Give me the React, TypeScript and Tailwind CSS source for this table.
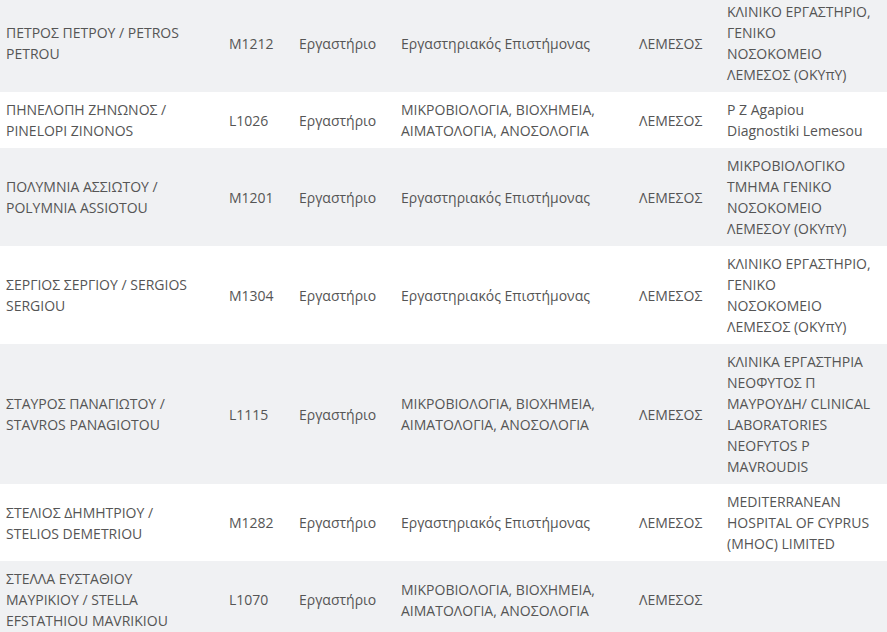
type Row = {
  name: string;
  code: string;
  kind: string;
  specialty: string;
  city: string;
  place: string;
};

const LAB = 'Εργαστήριο';
const SCIENTIST = 'Εργαστηριακός Επιστήμονας';
const MICRO = 'ΜΙΚΡΟΒΙΟΛΟΓΙΑ, ΒΙΟΧΗΜΕΙΑ, ΑΙΜΑΤΟΛΟΓΙΑ, ΑΝΟΣΟΛΟΓΙΑ';

const rows: Row[] = [
  { name: 'ΠΕΤΡΟΣ ΠΕΤΡΟΥ / PETROS PETROU', code: 'M1212', kind: LAB, specialty: SCIENTIST, city: 'ΛΕΜΕΣΟΣ', place: 'ΚΛΙΝΙΚΟ ΕΡΓΑΣΤΗΡΙΟ, ΓΕΝΙΚΟ ΝΟΣΟΚΟΜΕΙΟ ΛΕΜΕΣΟΣ (ΟΚΥπΥ)' },
  { name: 'ΠΗΝΕΛΟΠΗ ΖΗΝΩΝΟΣ / PINELOPI ZINONOS', code: 'L1026', kind: LAB, specialty: MICRO, city: 'ΛΕΜΕΣΟΣ', place: 'P Z Agapiou Diagnostiki Lemesou' },
  { name: 'ΠΟΛΥΜΝΙΑ ΑΣΣΙΩΤΟΥ / POLYMNIA ASSIOTOU', code: 'M1201', kind: LAB, specialty: SCIENTIST, city: 'ΛΕΜΕΣΟΣ', place: 'ΜΙΚΡΟΒΙΟΛΟΓΙΚΟ ΤΜΗΜΑ ΓΕΝΙΚΟ ΝΟΣΟΚΟΜΕΙΟ ΛΕΜΕΣΟΥ (ΟΚΥπΥ)' },
  { name: 'ΣΕΡΓΙΟΣ ΣΕΡΓΙΟΥ / SERGIOS SERGIOU', code: 'M1304', kind: LAB, specialty: SCIENTIST, city: 'ΛΕΜΕΣΟΣ', place: 'ΚΛΙΝΙΚΟ ΕΡΓΑΣΤΗΡΙΟ, ΓΕΝΙΚΟ ΝΟΣΟΚΟΜΕΙΟ ΛΕΜΕΣΟΣ (ΟΚΥπΥ)' },
  { name: 'ΣΤΑΥΡΟΣ ΠΑΝΑΓΙΩΤΟΥ / STAVROS PANAGIOTOU', code: 'L1115', kind: LAB, specialty: MICRO, city: 'ΛΕΜΕΣΟΣ', place: 'ΚΛΙΝΙΚΑ ΕΡΓΑΣΤΗΡΙΑ ΝΕΟΦΥΤΟΣ Π ΜΑΥΡΟΥΔΗ/ CLINICAL LABORATORIES NEOFYTOS P MAVROUDIS' },
  { name: 'ΣΤΕΛΙΟΣ ΔΗΜΗΤΡΙΟΥ / STELIOS DEMETRIOU', code: 'M1282', kind: LAB, specialty: SCIENTIST, city: 'ΛΕΜΕΣΟΣ', place: 'MEDITERRANEAN HOSPITAL OF CYPRUS (MHOC) LIMITED' },
  { name: 'ΣΤΕΛΛΑ ΕΥΣΤΑΘΙΟΥ ΜΑΥΡΙΚΙΟΥ / STELLA EFSTATHIOU MAVRIKIOU', code: 'L1070', kind: LAB, specialty: MICRO, city: 'ΛΕΜΕΣΟΣ', place: '' },
];

export default function App() {
  return (
    <div
      className="w-[887px] h-[632px] overflow-hidden bg-white text-[#555] text-[14px] leading-[21px]"
      style={{ fontFamily: '"Open Sans", "Noto Sans", sans-serif' }}
    >
      <table className="-mt-[6px] w-[887px] table-fixed border-collapse">
        <colgroup>
          <col className="w-[223px]" />
          <col className="w-[70px]" />
          <col className="w-[102px]" />
          <col className="w-[238px]" />
          <col className="w-[88px]" />
          <col className="w-[166px]" />
        </colgroup>
        <tbody>
          {rows.map((r, i) => (
            <tr key={r.code} className={i % 2 === 0 ? 'bg-[#f0f1f3]' : 'bg-white'}>
              <td className="align-middle py-[7px] pl-[6px] pr-[26px]">{r.name}</td>
              <td className="align-middle py-[7px] pl-[6px]">{r.code}</td>
              <td className="align-middle py-[7px] pl-[6px]">{r.kind}</td>
              <td className="align-middle py-[7px] pl-[6px] pr-[20px]">{r.specialty}</td>
              <td className="align-middle py-[7px] pl-[6px]">{r.city}</td>
              <td className="align-middle py-[7px] pl-[6px] pr-[16px]">{r.place}</td>
            </tr>
          ))}
        </tbody>
      </table>
    </div>
  );
}
